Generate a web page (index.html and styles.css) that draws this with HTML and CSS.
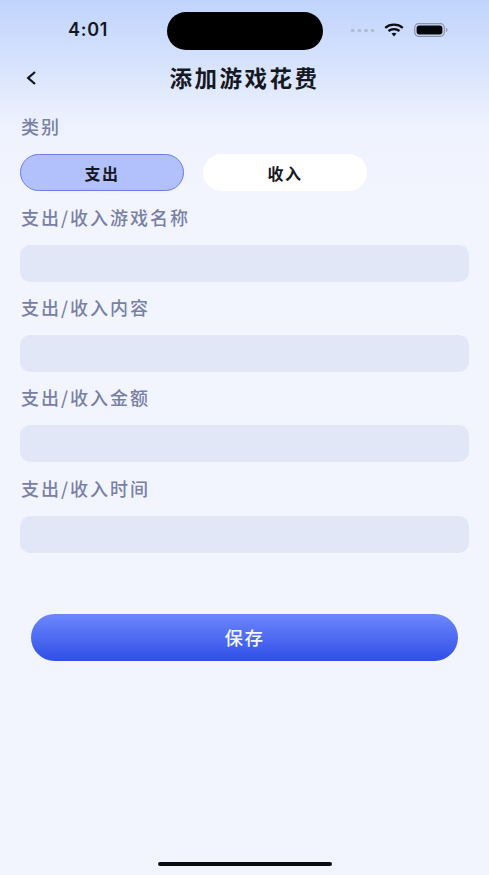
FILE: index.html
```html
<!DOCTYPE html>
<html lang="zh">
<head>
<meta charset="utf-8">
<title>添加游戏花费</title>
<link rel="stylesheet" href="styles.css">
</head>
<body>
<div class="screen">
  <div class="status">
    <span class="time">4:01</span>
    <div class="island"></div>
    <div class="status-icons">
      <svg class="dots" width="24" height="3" viewBox="0 0 24 3"><g fill="#b4bbcb"><rect x="0" y="0" width="3.6" height="3" rx="1"/><rect x="6.6" y="0" width="3.6" height="3" rx="1"/><rect x="13.2" y="0" width="3.6" height="3" rx="1"/><rect x="19.8" y="0" width="3.6" height="3" rx="1"/></g></svg>
      <svg class="wifi" width="20" height="14" viewBox="0 0 20 14"><g fill="none" stroke="#0b0d14" stroke-width="2.3" stroke-linecap="butt"><path d="M1.2 4.8C6 .6 14 .6 18.8 4.8"/><path d="M4.5 8C7.6 5.5 12.4 5.5 15.5 8"/></g><path d="M7.5 10.6C9 9.5 11 9.5 12.5 10.6L10 13.4Z" fill="#0b0d14"/></svg>
      <svg class="battery" width="34" height="14" viewBox="0 0 34 14"><rect x="0.7" y="0.7" width="29.6" height="12.6" rx="4" fill="none" stroke="#8d93a3" stroke-width="1.2"/><rect x="2.6" y="2.6" width="25.8" height="8.8" rx="2.6" fill="#05060a"/><path d="M32 5v4c.9-.3 1.4-1.100 1.400-2s-.5-1.700-1.400-2z" fill="#8d93a3"/></svg>
    </div>
  </div>
  <header class="nav">
    <svg class="back" width="12" height="16" viewBox="0 0 12 16"><path d="M10 2 3.200 8 10 14" fill="none" stroke="#111522" stroke-width="2.300"/></svg>
    <h1 class="title">添加游戏花费</h1>
  </header>
  <main class="form">
    <div class="label first">类别</div>
    <div class="choices">
      <div class="choice active">支出</div>
      <div class="choice">收入</div>
    </div>
    <div class="label tight">支出/收入游戏名称</div>
    <div class="field"></div>
    <div class="label">支出/收入内容</div>
    <div class="field"></div>
    <div class="label">支出/收入金额</div>
    <div class="field"></div>
    <div class="label">支出/收入时间</div>
    <div class="field"></div>
    <button class="save" type="button">保存</button>
  </main>
  <div class="home"></div>
</div>
</body>
</html>
```
FILE: styles.css
```css
* { box-sizing: border-box; }
html, body { margin: 0; padding: 0; }
body {
  width: 489px;
  height: 875px;
  overflow: hidden;
  font-family: "Noto Sans CJK SC", "Liberation Sans", sans-serif;
}
.screen {
  width: 489px;
  height: 875px;
  display: flex;
  flex-direction: column;
  background: linear-gradient(180deg, #c0d4fd 0, #d9e4fd 70px, #eef2fe 125px, #f3f5fe 200px, #f3f5fe 100%);
}
.status {
  height: 62px;
  display: flex;
  align-items: flex-start;
  flex: none;
}
.time {
  width: 167px;
  padding: 17px 0 0 68px;
  font: 600 18px/26px "Inter", "Liberation Sans", sans-serif;
  color: #15171f;
  letter-spacing: 0.7px;
}
.island {
  width: 156px;
  height: 38px;
  margin-top: 12px;
  border-radius: 19px;
  background: #000;
}
.status-icons {
  display: flex;
  align-items: center;
  margin: 23px 0 0 28px;
}
.wifi { margin-left: 9px; }
.battery { margin-left: 10px; }
.nav {
  height: 32px;
  display: flex;
  align-items: center;
  justify-content: center;
  position: relative;
  flex: none;
}
.back {
  position: absolute;
  left: 25px;
  top: 8px;
}
.title {
  margin: 0;
  font-size: 22.500px;
  line-height: 30px;
  font-weight: 700;
  color: #15181f;
  letter-spacing: 2.500px;
  padding-bottom: 3px;
}
.form {
  display: flex;
  flex-direction: column;
  align-items: flex-start;
  padding: 0 21px 0 20px;
}
.label {
  margin: 13.2px 0 16px 1px;
  font-size: 18px;
  line-height: 24px;
  font-weight: 500;
  color: #7880a5;
  letter-spacing: 2px;
}
.label.first { margin-top: 20px; }
.label.tight { margin-top: 14px; }
.choices {
  display: flex;
  gap: 19px;
}
.choice {
  width: 164px;
  height: 37px;
  border-radius: 19px;
  background: #fff;
  display: flex;
  align-items: center;
  justify-content: center;
  font-size: 16px;
  font-weight: 700;
  color: #15181f;
  letter-spacing: 1.500px;
}
.choice.active {
  background: #b2c0fb;
  border: 1.2px solid #6a7fea;
}
.field {
  width: 449px;
  height: 37px;
  border-radius: 10px;
  background: #e2e7f8;
}
.save {
  width: 427px;
  height: 47px;
  margin: 61px 0 0 11px;
  border: 0;
  border-radius: 24px;
  background: linear-gradient(180deg, #6d87fd 0%, #2f4fe6 100%);
  color: #f4f6ff;
  font-family: inherit;
  font-size: 18.500px;
  font-weight: 500;
  letter-spacing: 1.500px;
}
.home {
  width: 174px;
  height: 4px;
  border-radius: 2px;
  background: #0a0a0f;
  margin: auto auto 9px;
}
```
